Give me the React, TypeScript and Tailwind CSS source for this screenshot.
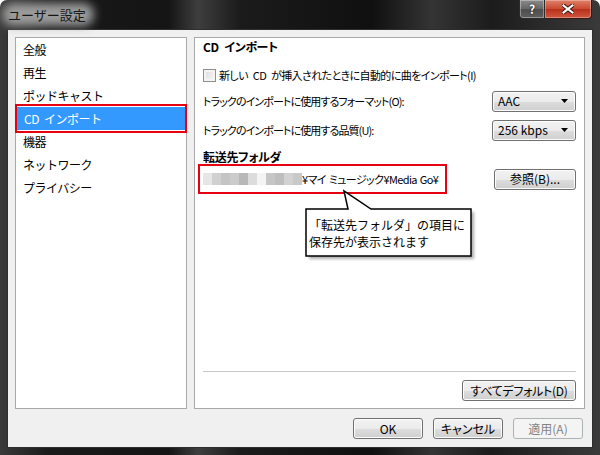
// User settings dialog - CD import page
const jp = "[font-family:'Noto_Sans_CJK_JP',sans-serif]";

function WinButton({ label, w = 'w-[70px]', disabled = false }: { label: string; w?: string; disabled?: boolean }) {
  if (disabled) {
    return (
      <div className={`${w} h-[21px] flex items-center justify-center rounded-[3px] border border-[#adb2b5] bg-[#f4f4f4] text-[12px] text-[#838383]`}>
        {label}
      </div>
    );
  }
  return (
    <div
      className={`${w} h-[21px] flex items-center justify-center rounded-[3px] border border-[#707070] bg-[linear-gradient(to_bottom,#f2f2f2_0%,#ebebeb_50%,#dddddd_51%,#cfcfcf_100%)] shadow-[inset_0_0_0_1px_#fcfcfc] text-[12px] text-black`}
    >
      {label}
    </div>
  );
}

function Select({ value }: { value: string }) {
  return (
    <div className="w-[84px] h-[21px] flex items-center justify-between pl-[5px] pr-[7px] rounded-[3px] border border-[#707070] bg-[linear-gradient(to_bottom,#f2f2f2_0%,#ebebeb_50%,#dddddd_51%,#cfcfcf_100%)] shadow-[inset_0_0_0_1px_#fcfcfc] text-[12px] tracking-normal [word-spacing:normal] text-black">
      <span>{value}</span>
      <svg width="7" height="4" viewBox="0 0 7 4">
        <path d="M0 0H7L3.5 4Z" fill="#000" />
      </svg>
    </div>
  );
}

export default function App() {
  const items = ['全般', '再生', 'ポッドキャスト', 'CD インポート', '機器', 'ネットワーク', 'プライバシー'];
  const blur = ['#e6e6e6', '#d0d0d0', '#c4c4c4', '#cbcbcb', '#b8b8b8', '#dcdcdc', '#f4f4f4', '#c6c6c6', '#bebebe', '#d2d2d2', '#c9c9c9'];

  return (
    <div className={`w-[600px] h-[455px] relative overflow-hidden rounded-t-[7px] flex flex-col bg-[linear-gradient(to_right,#3a3a3a_0%,#1a1a1a_8%,#141414_28%,#3e3e3e_33%,#1b1b1b_40%,#101010_62%,#343434_72%,#1c1c1c_82%,#3a3a3a_100%)] ${jp}`}>
      {/* Title bar */}
      <div className="h-[29px] relative flex items-center pl-[6px] shrink-0">
        <span className="relative text-[13px] text-[#161616] px-[2px]">
          <span className="absolute -left-[4px] -right-[6px] -top-[2px] -bottom-[2px] bg-[#9c9c9c] blur-[5px] rounded-full" />
          <span className="relative">ユーザー設定</span>
        </span>
        <div className="absolute right-[8px] top-0 flex">
          <div className="w-[26px] h-[19px] flex items-center justify-center rounded-bl-[4px] border border-[#2a2a2a] border-t-0 bg-[linear-gradient(to_bottom,#8a8a8a_0%,#666666_50%,#4e4e4e_51%,#5e5e5e_100%)] shadow-[inset_0_0_0_1px_rgba(255,255,255,0.35)] text-white text-[12px] font-bold [text-shadow:0_0_2px_#000]">
            ?
          </div>
          <div className="w-[47px] h-[19px] flex items-center justify-center rounded-br-[4px] border border-[#3a1a14] border-t-0 border-l-0 bg-[linear-gradient(to_bottom,#e0806a_0%,#c9492f_50%,#b8301c_51%,#d0573e_100%)] shadow-[inset_0_0_0_1px_rgba(255,255,255,0.3)]">
            <svg width="12" height="10" viewBox="0 0 12 10">
              <path d="M1 1L11 9M11 1L1 9" stroke="#3a1510" strokeWidth="4" strokeLinecap="square" />
              <path d="M1.5 1.5L10.5 8.5M10.5 1.5L1.5 8.5" stroke="#fff" strokeWidth="2.2" strokeLinecap="square" />
            </svg>
          </div>
        </div>
      </div>

      {/* Client area */}
      <div className="flex-1 ml-[7px] mr-[7px] mb-[7px] bg-[#f0f0f0] border border-[#2e2e2e] flex flex-col pt-[7px] px-[7px]">
        <div className="h-[372px] flex gap-[7px]">
          {/* Left list */}
          <div className="w-[172px] bg-white border border-[#a9a9a9] flex flex-col text-[12px] text-black">
            {items.map((item, i) => (
              <div
                key={item}
                className={`h-[23px] flex items-center pl-[7px] tracking-[-0.5px] relative ${i === 3 ? 'mx-[1px] bg-[#3399ff] text-white pl-[6px] [word-spacing:3px]' : ''}`}
              >
                {item}
                {i === 3 && <span className="absolute -left-[2px] -right-[2px] -top-[3px] -bottom-[3px] border-2 border-[#e60012]" />}
              </div>
            ))}
          </div>

          {/* Right panel */}
          <div className="flex-1 bg-white border border-[#a9a9a9] relative flex flex-col pl-[8px] pr-[8px] text-[11px] tracking-[-0.6px] [word-spacing:3px] text-black [font-feature-settings:'palt']">
            <div className="h-[18px] flex items-center font-bold text-[12px] tracking-[-0.3px]">CD インポート</div>

            <div className="h-[18px] mt-[10px] flex items-center gap-[3px]">
              <span className="w-[13px] h-[13px] border border-[#8e8f8f] bg-[linear-gradient(135deg,#dcdcdc,#f8f8f8)] shadow-[inset_0_0_0_2px_#f4f4f4]" />
              <span>新しい CD が挿入されたときに自動的に曲をインポート(I)</span>
            </div>

            <div className="h-[20px] mt-[7px] flex items-center justify-between">
              <span className="tracking-[-0.9px]">トラックのインポートに使用するフォーマット(O):</span>
              <Select value="AAC" />
            </div>

            <div className="h-[20px] mt-[9px] flex items-center justify-between">
              <span className="tracking-[-0.9px]">トラックのインポートに使用する品質(U):</span>
              <Select value="256 kbps" />
            </div>

            <div className="h-[18px] mt-[8px] flex items-center font-bold text-[12px] tracking-[-0.3px]">転送先フォルダ</div>

            <div className="h-[22px] mt-[2px] flex items-center justify-between relative">
              <div className="flex items-center">
                <div className="flex h-[12px]">
                  {blur.map((c, i) => (
                    <span key={i} className="w-[9px] h-[12px]" style={{ background: c }} />
                  ))}
                </div>
                <span className="[word-spacing:1px]">¥マイ ミュージック¥Media Go¥</span>
              </div>
              <div className="tracking-normal [word-spacing:normal]">
                <WinButton label="参照(B)..." w="w-[82px]" />
              </div>
              <span className="absolute -left-[5px] top-[-4px] w-[249px] h-[30px] border-2 border-[#e60012]" />
            </div>

            <div className="flex-1" />
            <div className="h-px bg-[#c8c8c8]" />
            <div className="flex justify-end mt-[8px] mb-[7px] tracking-[-0.3px]">
              <WinButton label="すべてデフォルト(D)" w="w-[114px]" />
            </div>

            {/* Callout */}
            <div className="absolute left-[100px] top-[145px] w-[185px] h-[82px] tracking-normal [word-spacing:normal] [font-feature-settings:normal]">
              <svg width="185" height="82" viewBox="0 0 185 82" className="absolute left-0 top-0">
                <defs>
                  <filter id="sh" x="-10%" y="-10%" width="130%" height="140%">
                    <feGaussianBlur stdDeviation="1.5" />
                  </filter>
                </defs>
                <path d="M14 29H56L52 11L79 29H179V76H14Z" fill="#8c8c8c" opacity="0.7" filter="url(#sh)" />
                <path d="M11 26H53L49 8L76 26H176V73H11Z" fill="#fff" stroke="#000" strokeWidth="1.5" />
              </svg>
              <div className="absolute left-[14px] top-[33px] text-[12px] leading-[17px] text-black">
                <div>「転送先フォルダ」の項目に</div>
                <div>保存先が表示されます</div>
              </div>
            </div>
          </div>
        </div>

        {/* Dialog buttons */}
        <div className="flex justify-end gap-[10px] mt-[9px] pr-[2px] [font-feature-settings:'palt']">
          <WinButton label="OK" />
          <WinButton label="キャンセル" />
          <WinButton label="適用(A)" disabled />
        </div>
      </div>
    </div>
  );
}
